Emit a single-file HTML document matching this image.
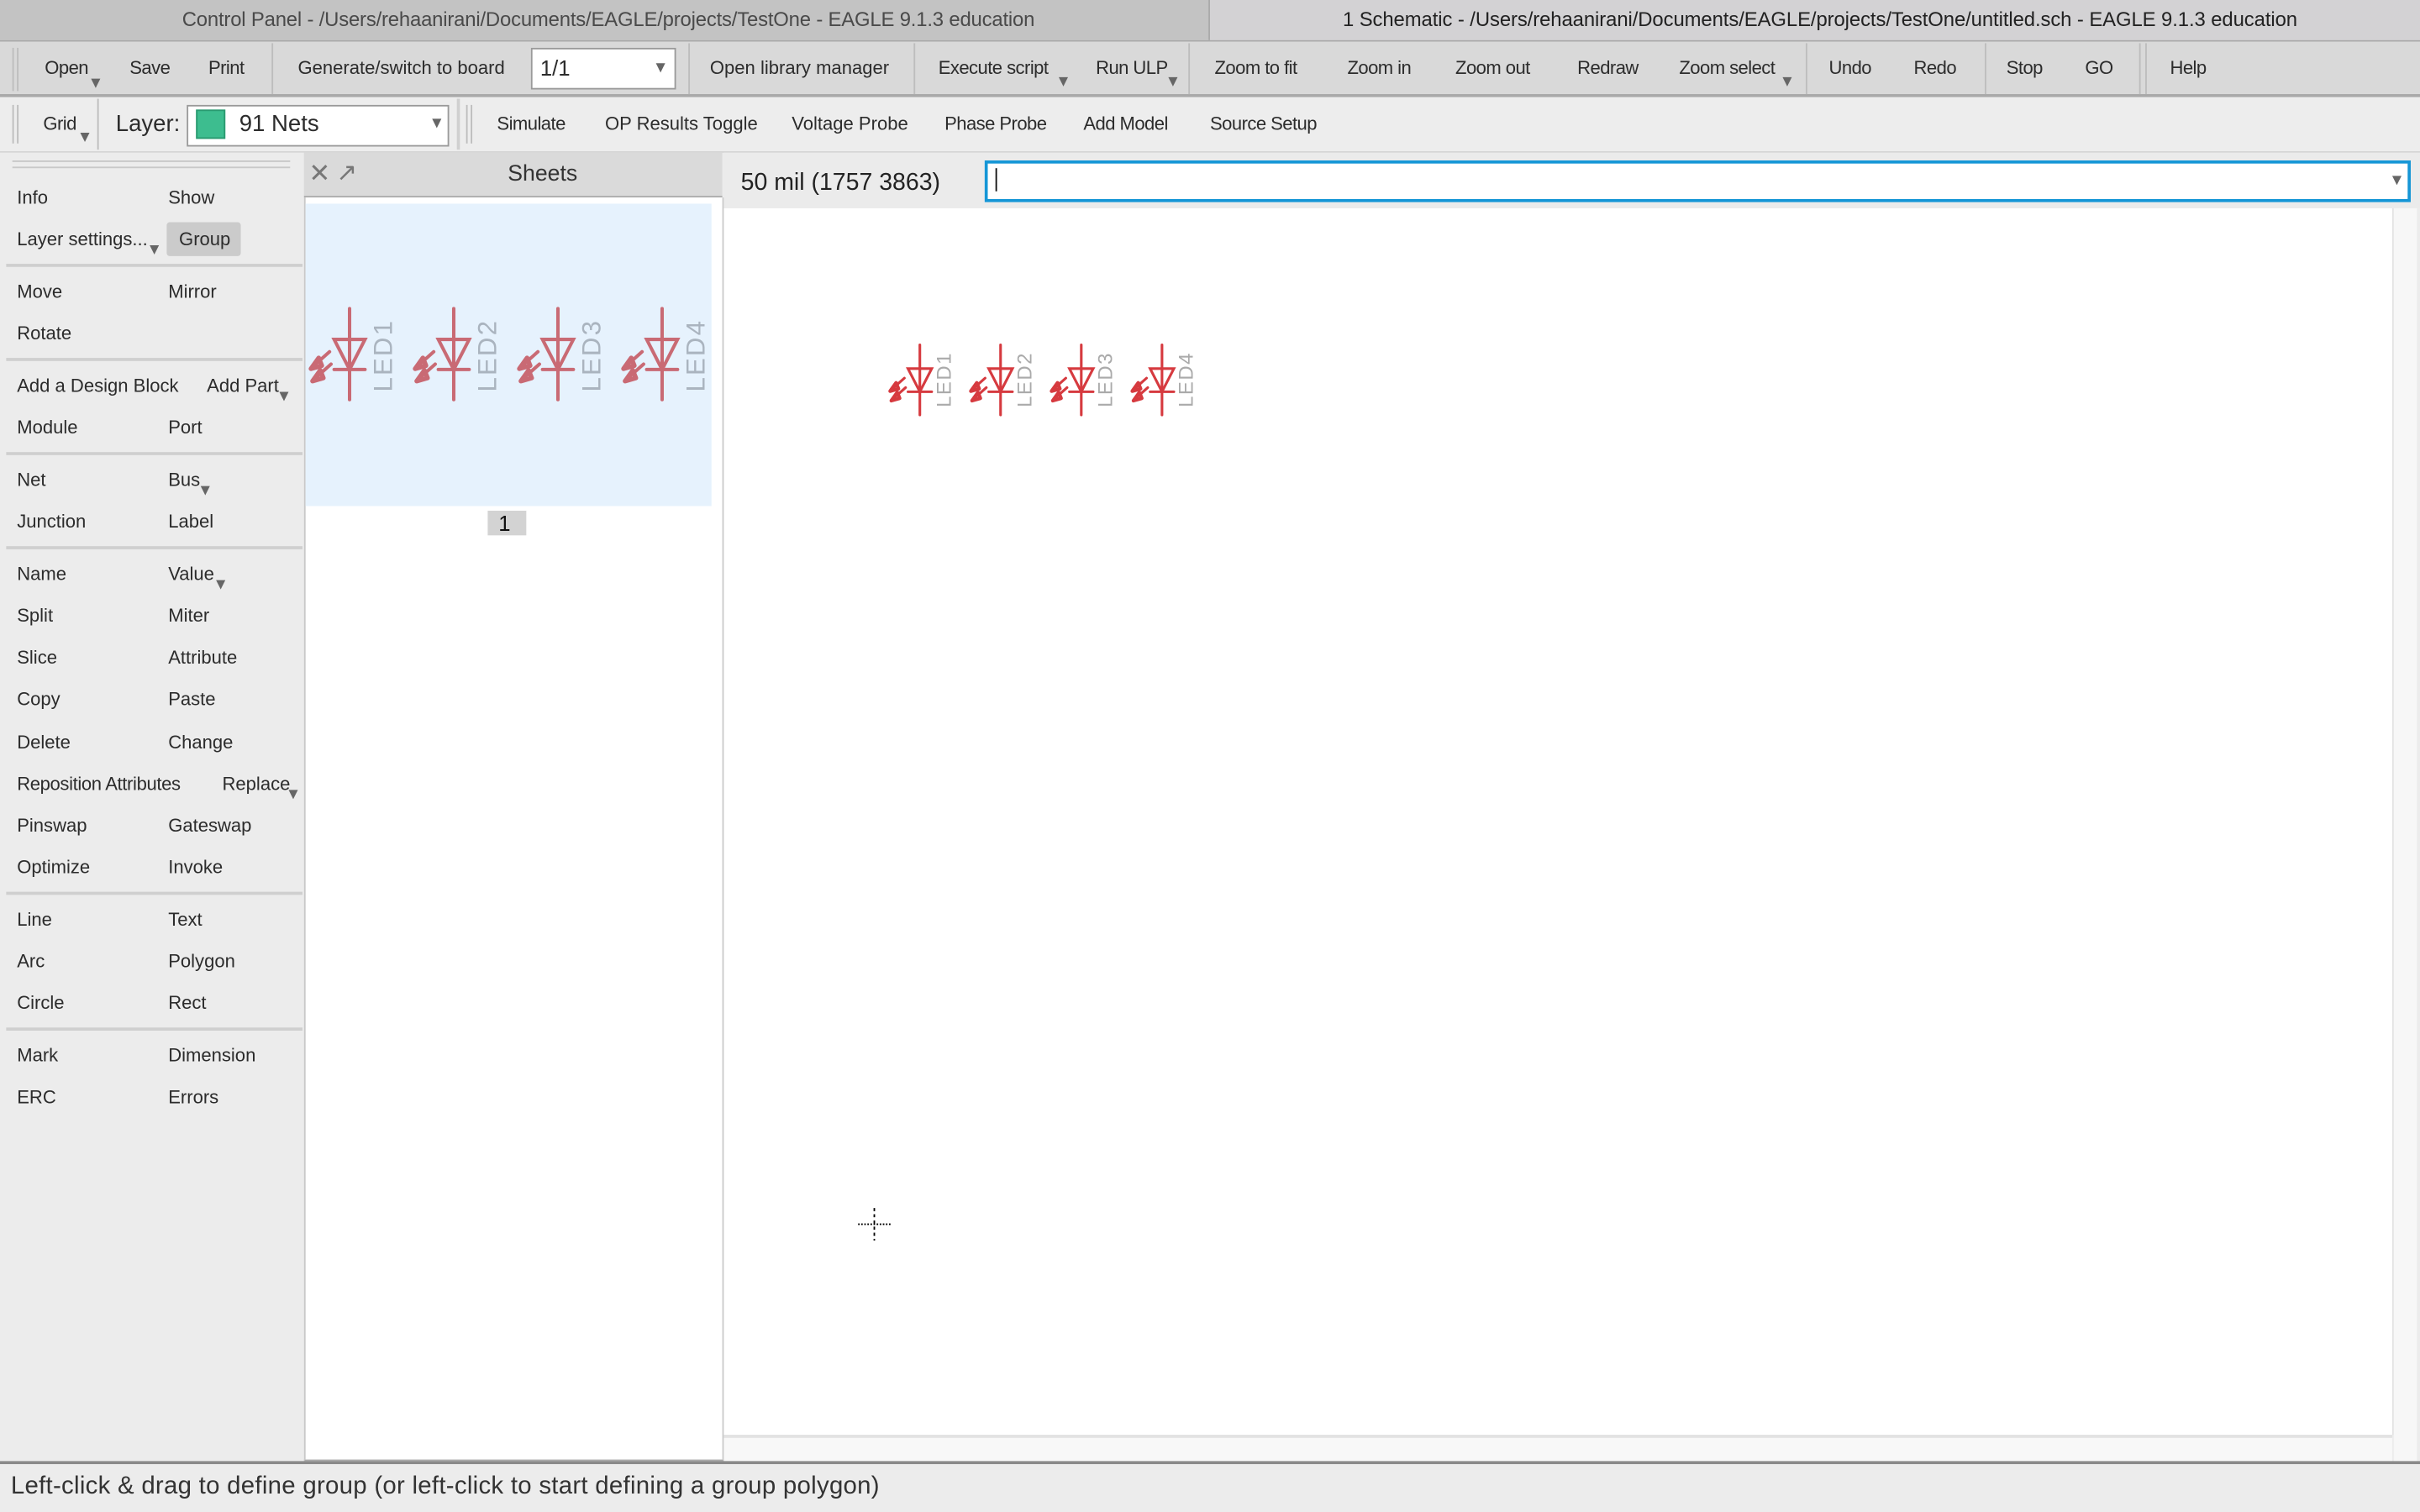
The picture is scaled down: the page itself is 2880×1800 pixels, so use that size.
<!DOCTYPE html>
<html><head><meta charset="utf-8">
<style>
html,body{margin:0;padding:0;width:2880px;height:1800px;overflow:hidden;background:#ececec;}
#w{position:absolute;left:0;top:0;width:1568px;height:980px;transform:scale(1.836735);transform-origin:0 0;font-family:"Liberation Sans",sans-serif;color:#2c2c2c;}
.a{position:absolute;}
.t{position:absolute;font-size:12px;white-space:nowrap;line-height:14px;}
.n{letter-spacing:-0.3px;}
.dd{position:absolute;width:0;height:0;border-left:3px solid transparent;border-right:3px solid transparent;border-top:6px solid #666;}
.vs{position:absolute;width:1px;background:#bdbdbd;}
.hs{position:absolute;left:4px;width:192px;height:2px;background:#cfcfcf;}
</style></head><body>
<div id="w">
<!-- title bar -->
<div class="a" style="left:0;top:0;width:1568px;height:26px;background:#cdcdcd;border-bottom:1px solid #a9a9a9;"></div>
<div class="a" style="left:0;top:0;width:783px;height:26px;background:#c3c3c3;border-right:1px solid #aaa;"></div>
<div class="a" style="left:784px;top:0;width:784px;height:26px;background:#d3d2d4;"></div>
<div class="t" style="left:118px;top:6px;font-size:13px;letter-spacing:-0.1px;color:#4a4a4a;">Control Panel - /Users/rehaanirani/Documents/EAGLE/projects/TestOne - EAGLE 9.1.3 education</div>
<div class="t" style="left:870px;top:6px;font-size:13px;letter-spacing:-0.05px;color:#222;">1 Schematic - /Users/rehaanirani/Documents/EAGLE/projects/TestOne/untitled.sch - EAGLE 9.1.3 education</div>

<!-- toolbar 1 -->
<div class="a" style="left:0;top:27px;width:1568px;height:34px;background:#d9d9d9;border-bottom:2px solid #a9a9a9;"></div>
<div class="vs" style="left:8px;top:31px;height:28px;"></div><div class="vs" style="left:11px;top:31px;height:28px;"></div>
<div class="t n" style="left:29px;top:37px;">Open</div><div class="dd" style="left:59px;top:51px;"></div>
<div class="t n" style="left:84px;top:37px;">Save</div>
<div class="t n" style="left:135px;top:37px;">Print</div>
<div class="vs" style="left:176px;top:28px;height:33px;"></div>
<div class="t" style="left:193px;top:37px;">Generate/switch to board</div>
<div class="a" style="left:344px;top:31px;width:92px;height:25px;background:#fff;border:1px solid #9a9a9a;"></div>
<div class="t" style="left:350px;top:37px;font-size:14px;">1/1</div>
<div class="dd" style="left:425px;top:41px;"></div>
<div class="vs" style="left:446px;top:28px;height:33px;"></div>
<div class="t" style="left:460px;top:37px;">Open library manager</div>
<div class="vs" style="left:592px;top:28px;height:33px;"></div>
<div class="t n" style="left:608px;top:37px;">Execute script</div><div class="dd" style="left:686px;top:50px;"></div>
<div class="t n" style="left:710px;top:37px;">Run ULP</div><div class="dd" style="left:757px;top:50px;"></div>
<div class="vs" style="left:770px;top:28px;height:33px;"></div>
<div class="t n" style="left:787px;top:37px;">Zoom to fit</div>
<div class="t n" style="left:873px;top:37px;">Zoom in</div>
<div class="t n" style="left:943px;top:37px;">Zoom out</div>
<div class="t n" style="left:1022px;top:37px;">Redraw</div>
<div class="t n" style="left:1088px;top:37px;">Zoom select</div><div class="dd" style="left:1155px;top:50px;"></div>
<div class="vs" style="left:1170px;top:28px;height:33px;"></div>
<div class="t n" style="left:1185px;top:37px;">Undo</div>
<div class="t n" style="left:1240px;top:37px;">Redo</div>
<div class="vs" style="left:1286px;top:28px;height:33px;"></div>
<div class="t n" style="left:1300px;top:37px;">Stop</div>
<div class="t n" style="left:1351px;top:37px;">GO</div>
<div class="vs" style="left:1386px;top:28px;height:33px;"></div><div class="vs" style="left:1390px;top:28px;height:33px;"></div>
<div class="t n" style="left:1406px;top:37px;">Help</div>

<!-- toolbar 2 -->
<div class="a" style="left:0;top:63px;width:1568px;height:35px;background:#ededed;border-bottom:1px solid #d5d5d5;"></div>
<div class="vs" style="left:8px;top:68px;height:25px;"></div><div class="vs" style="left:11px;top:68px;height:25px;"></div>
<div class="t n" style="left:28px;top:73px;">Grid</div><div class="dd" style="left:52px;top:86px;"></div>
<div class="vs" style="left:63px;top:64px;height:33px;"></div>
<div class="t" style="left:75px;top:72px;font-size:15px;line-height:17px;">Layer:</div>
<div class="a" style="left:121px;top:68px;width:168px;height:25px;background:#fff;border:1px solid #9a9a9a;"></div>
<div class="a" style="left:127px;top:71px;width:19px;height:19px;background:#3dbd8f;border:1px solid #2a9a70;box-sizing:border-box;"></div>
<div class="t" style="left:155px;top:72px;font-size:15px;line-height:17px;">91 Nets</div>
<div class="dd" style="left:280px;top:77px;"></div>
<div class="a" style="left:296px;top:64px;width:2px;height:33px;background:#d0d0d0;"></div>
<div class="vs" style="left:302px;top:68px;height:25px;"></div><div class="vs" style="left:305px;top:68px;height:25px;"></div>
<div class="t n" style="left:322px;top:73px;">Simulate</div>
<div class="t" style="left:392px;top:73px;">OP Results Toggle</div>
<div class="t" style="left:513px;top:73px;">Voltage Probe</div>
<div class="t n" style="left:612px;top:73px;">Phase Probe</div>
<div class="t n" style="left:702px;top:73px;">Add Model</div>
<div class="t n" style="left:784px;top:73px;">Source Setup</div>

<!-- left panel -->
<div class="a" style="left:0;top:99px;width:197px;height:849px;background:#ececec;border-right:1px solid #d0d0d0;"></div>
<div class="a" style="left:8px;top:104px;width:180px;height:1px;background:#c8c8c8;"></div>
<div class="a" style="left:8px;top:108px;width:180px;height:1px;background:#c8c8c8;"></div>
<div class="t" style="left:11px;top:121px;">Info</div><div class="t" style="left:109px;top:121px;">Show</div>
<div class="t" style="left:11px;top:148px;">Layer settings...</div><div class="dd" style="left:97px;top:159px;"></div>
<div class="a" style="left:108px;top:144px;width:48px;height:22px;background:#cbcbcb;border-radius:2px;"></div>
<div class="t" style="left:116px;top:148px;">Group</div>
<div class="hs" style="top:171px;"></div>
<div class="t" style="left:11px;top:182px;">Move</div><div class="t" style="left:109px;top:182px;">Mirror</div>
<div class="t" style="left:11px;top:209px;">Rotate</div>
<div class="hs" style="top:232px;"></div>
<div class="t" style="left:11px;top:243px;">Add a Design Block</div><div class="t" style="left:134px;top:243px;">Add Part</div><div class="dd" style="left:181px;top:254px;"></div>
<div class="t" style="left:11px;top:270px;">Module</div><div class="t" style="left:109px;top:270px;">Port</div>
<div class="hs" style="top:293px;"></div>
<div class="t" style="left:11px;top:304px;">Net</div><div class="t" style="left:109px;top:304px;">Bus</div><div class="dd" style="left:130px;top:315px;"></div>
<div class="t" style="left:11px;top:331px;">Junction</div><div class="t" style="left:109px;top:331px;">Label</div>
<div class="hs" style="top:354px;"></div>
<div class="t" style="left:11px;top:365px;">Name</div><div class="t" style="left:109px;top:365px;">Value</div><div class="dd" style="left:140px;top:376px;"></div>
<div class="t" style="left:11px;top:392px;">Split</div><div class="t" style="left:109px;top:392px;">Miter</div>
<div class="t" style="left:11px;top:419px;">Slice</div><div class="t" style="left:109px;top:419px;">Attribute</div>
<div class="t" style="left:11px;top:446px;">Copy</div><div class="t" style="left:109px;top:446px;">Paste</div>
<div class="t" style="left:11px;top:474px;">Delete</div><div class="t" style="left:109px;top:474px;">Change</div>
<div class="t" style="left:11px;top:501px;letter-spacing:-0.2px;">Reposition Attributes</div><div class="t" style="left:144px;top:501px;">Replace</div><div class="dd" style="left:187px;top:512px;"></div>
<div class="t" style="left:11px;top:528px;">Pinswap</div><div class="t" style="left:109px;top:528px;">Gateswap</div>
<div class="t" style="left:11px;top:555px;">Optimize</div><div class="t" style="left:109px;top:555px;">Invoke</div>
<div class="hs" style="top:578px;"></div>
<div class="t" style="left:11px;top:589px;">Line</div><div class="t" style="left:109px;top:589px;">Text</div>
<div class="t" style="left:11px;top:616px;">Arc</div><div class="t" style="left:109px;top:616px;">Polygon</div>
<div class="t" style="left:11px;top:643px;">Circle</div><div class="t" style="left:109px;top:643px;">Rect</div>
<div class="hs" style="top:666px;"></div>
<div class="t" style="left:11px;top:677px;">Mark</div><div class="t" style="left:109px;top:677px;">Dimension</div>
<div class="t" style="left:11px;top:704px;">ERC</div><div class="t" style="left:109px;top:704px;">Errors</div>

<!-- sheets panel -->
<div class="a" style="left:197px;top:99px;width:271px;height:28px;background:#dadada;border-bottom:1px solid #a9a9a9;"></div>
<div class="t" style="left:200px;top:103px;font-size:17px;line-height:19px;color:#777;">✕</div>
<div class="t" style="left:218px;top:103px;font-size:16px;line-height:19px;color:#777;">↗</div>
<div class="t" style="left:329px;top:105px;font-size:14.5px;line-height:17px;color:#333;">Sheets</div>
<div class="a" style="left:197px;top:128px;width:270px;height:818px;background:#fff;border-left:1px solid #c9c9c9;border-right:1px solid #c9c9c9;border-bottom:1px solid #a9a9a9;"></div>
<div class="a" style="left:198px;top:132px;width:263px;height:196px;background:#e6f2fd;"></div>
<div class="a" style="left:316px;top:331px;width:25px;height:16px;background:#d3d3d3;"></div>
<div class="t" style="left:323px;top:331px;font-size:14px;line-height:16px;color:#111;">1</div>

<svg class="a" style="left:0;top:0;" width="1568" height="980" viewBox="0 0 1568 980">
 <defs>
  <g id="led" fill="none" stroke-width="2.2" stroke-linecap="round">
   <line x1="0" y1="0" x2="0" y2="59"/>
   <polygon points="-10,20 10,20 0,39.5" stroke-linejoin="miter"/>
   <line x1="-10" y1="39.5" x2="10" y2="39.5"/>
   <line x1="-13" y1="28" x2="-22" y2="36"/>
   <line x1="-12" y1="36" x2="-21" y2="44"/>
   <polygon points="-25,39 -20,32 -18,37" stroke-width="3" stroke-linejoin="round"/>
   <polygon points="-24,47 -19,40 -17,45" stroke-width="3" stroke-linejoin="round"/>
  </g>
 </defs>
 <g stroke="#c96a74" fill="#c96a74">
  <use href="#led" transform="translate(226.5,200)"/>
  <use href="#led" transform="translate(294,200)"/>
  <use href="#led" transform="translate(361.5,200)"/>
  <use href="#led" transform="translate(429,200)"/>
 </g>
 <g font-family="Liberation Sans, sans-serif" font-size="17" fill="#aab4bf">
  <text transform="translate(254,254) rotate(-90)" textLength="46">LED1</text>
  <text transform="translate(321.5,254) rotate(-90)" textLength="46">LED2</text>
  <text transform="translate(389,254) rotate(-90)" textLength="46">LED3</text>
  <text transform="translate(456.5,254) rotate(-90)" textLength="46">LED4</text>
 </g>
</svg>

<!-- canvas area -->
<div class="a" style="left:469px;top:99px;width:1099px;height:36px;background:#ebebeb;"></div>
<div class="t" style="left:480px;top:110px;font-size:15.5px;line-height:17px;color:#222;">50 mil (1757 3863)</div>
<div class="a" style="left:638px;top:104px;width:920px;height:23px;background:#fff;border:2px solid #1596d6;"></div>
<div class="a" style="left:645px;top:109px;width:1px;height:15px;background:#111;"></div>
<div class="dd" style="left:1550px;top:114px;border-top-color:#666;"></div>
<div class="a" style="left:469px;top:135px;width:1081px;height:795px;background:#fff;"></div>
<div class="a" style="left:1550px;top:135px;width:1px;height:795px;background:#e3e3e3;"></div>
<div class="a" style="left:1551px;top:135px;width:15px;height:812px;background:#f7f7f7;"></div>
<div class="a" style="left:469px;top:930px;width:1081px;height:2px;background:#e2e2e2;"></div>
<div class="a" style="left:469px;top:932px;width:1081px;height:15px;background:#f8f8f8;"></div>

<svg class="a" style="left:0;top:0;" width="1568" height="980" viewBox="0 0 1568 980">
 <g stroke="#d63a3f" fill="#d63a3f">
  <use href="#led" transform="translate(596,223.5) scale(0.77)"/>
  <use href="#led" transform="translate(648.3,223.5) scale(0.77)"/>
  <use href="#led" transform="translate(700.6,223.5) scale(0.77)"/>
  <use href="#led" transform="translate(752.9,223.5) scale(0.77)"/>
 </g>
 <g font-family="Liberation Sans, sans-serif" font-size="13" fill="#aaaaaa">
  <text transform="translate(616,264) rotate(-90)" textLength="35">LED1</text>
  <text transform="translate(668.3,264) rotate(-90)" textLength="35">LED2</text>
  <text transform="translate(720.6,264) rotate(-90)" textLength="35">LED3</text>
  <text transform="translate(772.9,264) rotate(-90)" textLength="35">LED4</text>
 </g>
 <g stroke="#000" stroke-width="1" stroke-dasharray="2,2">
  <line x1="566.5" y1="783" x2="566.5" y2="804"/>
  <line x1="556" y1="793.5" x2="578" y2="793.5" stroke-dasharray="1,1"/>
 </g>
</svg>

<!-- status bar -->
<div class="a" style="left:0;top:947px;width:1568px;height:2px;background:#8a8a8a;"></div>
<div class="a" style="left:0;top:949px;width:1568px;height:31px;background:#ececec;"></div>
<div class="t" style="left:7px;top:955px;font-size:16px;line-height:18px;letter-spacing:0.15px;color:#333;">Left-click &amp; drag to define group (or left-click to start defining a group polygon)</div>
</div>
</body></html>
